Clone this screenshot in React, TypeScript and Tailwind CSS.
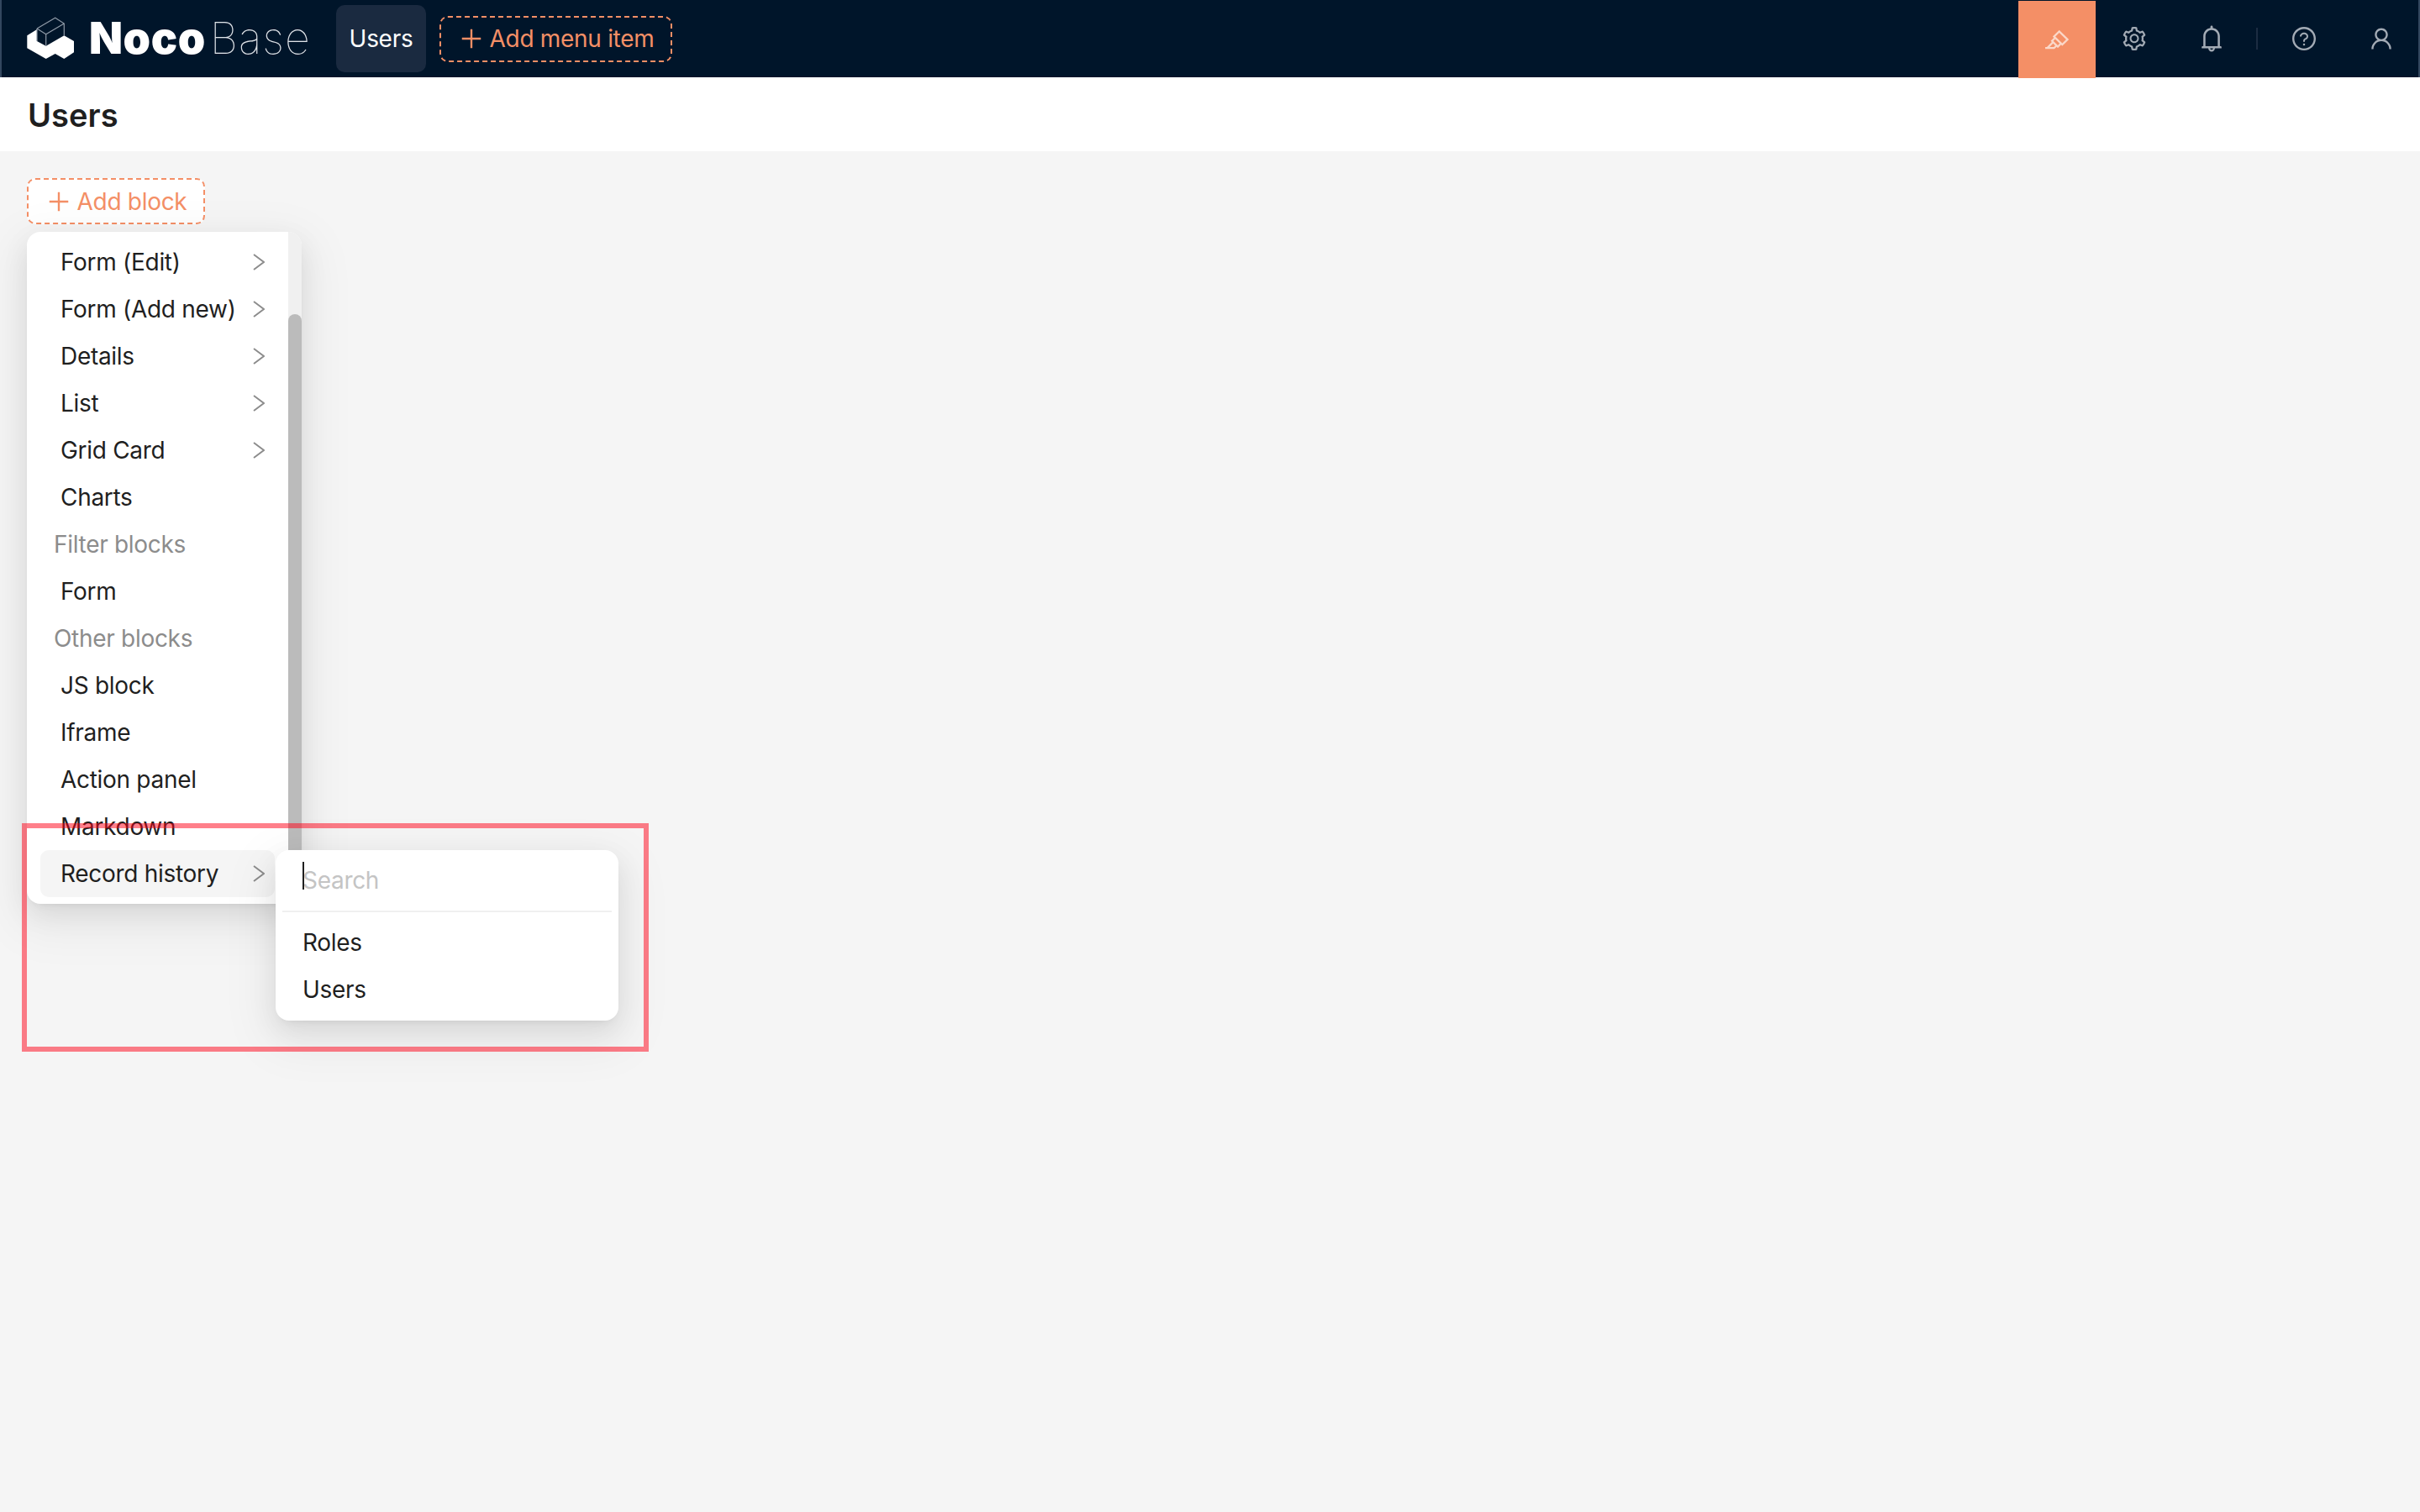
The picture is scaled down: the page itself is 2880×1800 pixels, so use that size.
import React from "react";
import { AiOutlineHighlight, AiOutlineSetting, AiOutlineBell, AiOutlineQuestionCircle, AiOutlineUser, AiOutlinePlus } from "react-icons/ai";

const Chevron = () => (
  <svg width="14" height="20" viewBox="0 0 14 20" fill="none" stroke="#8c8c8c" strokeWidth="2" className="shrink-0">
    <path d="M1 1l12 9-12 9" />
  </svg>
);

const Logo = () => (
  <div className="flex items-center">
    <svg width="58" height="52" viewBox="0 0 58 52" className="shrink-0">
      <path d="M0.3 22.3L12 15V29L22.7 34.7L44.3 22.3L56 29V42.3L44.3 50L33.7 44L22.7 50L0.3 37.3Z" fill="#fff" />
      <path d="M12 14L33.7 1.3L44.3 8V22.3M12 14L22.7 20.7L44.3 8M22.7 20.7V34.7M12 14V29" fill="none" stroke="#8e99a6" strokeWidth="1.2" />
    </svg>
    <span className="ml-[16px] text-[52px] font-black leading-none tracking-[0.6px] text-white">Noco</span>
    <span className="ml-[5px] text-[52px] font-thin leading-none tracking-[1px] text-[#dfe3e8]">Base</span>
  </div>
);

const HeaderIcon = ({ children }: { children: React.ReactNode }) => (
  <div className="flex h-[92px] w-[92px] items-center justify-center text-[#a3abb5]">{children}</div>
);

const Row = ({ label, arrow }: { label: string; arrow?: boolean }) => (
  <div className="flex h-[56px] items-center justify-between pl-[24px] pr-[12px] text-[#1f1f1f]">
    <span>{label}</span>
    {arrow && <Chevron />}
  </div>
);

const Group = ({ label }: { label: string }) => (
  <div className="flex h-[56px] items-center pl-[16px] text-[#8c8c8c]">{label}</div>
);

const shadow = "shadow-[0_12px_32px_0_rgba(0,0,0,0.08),0_6px_12px_-8px_rgba(0,0,0,0.12),0_18px_56px_16px_rgba(0,0,0,0.05)]";

export default function App() {
  return (
    <div className="flex h-screen flex-col overflow-hidden bg-[#f5f5f5] text-[28px] tracking-[-0.3px] font-['Inter','Liberation_Sans',sans-serif]">
      <header className="flex h-[92px] shrink-0 items-center justify-between border-x-2 border-x-[#33475f] bg-[#00152a]">
        <div className="flex items-center">
          <div className="ml-[30px] w-[368px]"><Logo /></div>
          <div className="flex h-[80px] w-[107px] items-center justify-center rounded-[10px] bg-[#1a2a40] text-white">Users</div>
          <div className="ml-[16px] flex h-[55px] w-[277px] items-center justify-center gap-[6px] rounded-[10px] border-2 border-dashed border-[#f48f66] text-[#f48f66]">
            <AiOutlinePlus size={32} />
            <span>Add menu item</span>
          </div>
        </div>
        <div className="-mr-[2px] flex items-center">
          <div className="flex h-[92px] w-[92px] translate-y-[1px] items-center justify-center bg-[#f48f66] text-[#fbd8c9]">
            <AiOutlineHighlight size={32} />
          </div>
          <HeaderIcon><AiOutlineSetting size={32} /></HeaderIcon>
          <HeaderIcon><AiOutlineBell size={36} /></HeaderIcon>
          <div className="ml-[7px] mr-[9px] h-[26px] w-[2px] bg-[#1c2c42]" />
          <HeaderIcon><AiOutlineQuestionCircle size={32} /></HeaderIcon>
          <HeaderIcon><AiOutlineUser size={32} /></HeaderIcon>
        </div>
      </header>

      <div className="flex h-[88px] shrink-0 items-center bg-white pl-[33px] pt-[2px]">
        <h1 className="text-[38px] font-semibold leading-none tracking-[0.1px] text-[#1f1f1f]">Users</h1>
      </div>

      <main className="relative flex-1 pl-[32px] pt-[32px]">
        <div className="flex h-[55px] w-[212px] items-center justify-center gap-[6px] rounded-[10px] border-2 border-dashed border-[#f48f66] bg-white text-[#f48f66]">
          <AiOutlinePlus size={32} />
          <span>Add block</span>
        </div>

        <div className="relative mt-[9px] w-[327px]">
          <div className={`h-[800px] w-[327px] overflow-hidden rounded-[16px] bg-white py-[8px] pl-[16px] pr-[32px] ${shadow}`}>
            <Row label="Form (Edit)" arrow />
            <Row label="Form (Add new)" arrow />
            <Row label="Details" arrow />
            <Row label="List" arrow />
            <Row label="Grid Card" arrow />
            <Row label="Charts" />
            <Group label="Filter blocks" />
            <Row label="Form" />
            <Group label="Other blocks" />
            <Row label="JS block" />
            <Row label="Iframe" />
            <Row label="Action panel" />
            <Row label="Markdown" />
            <div className="rounded-[10px] bg-[#f5f5f5]"><Row label="Record history" arrow /></div>
          </div>

          <div className="absolute right-0 top-0 h-[800px] w-[16px] rounded-r-[16px] bg-[#f0f0f0]">
            <div className="absolute bottom-0 left-0 top-[98px] w-[16px] rounded-t-[8px] bg-[#bbbbbb]" />
          </div>

          <div className={`absolute left-[296px] top-[736px] w-[408px] rounded-[16px] bg-white ${shadow}`}>
            <div className="flex h-[72px] items-center pl-[32px] text-[#c4c4c4]">
              <span className="relative">
                <span className="absolute -top-[1px] left-0 h-[33px] w-[2px] bg-[#1f1f1f]" />
                Search
              </span>
            </div>
            <div className="mx-[8px] h-[2px] bg-[#f0f0f0]" />
            <div className="pb-[9px] pt-[8px]">
              <div className="flex h-[56px] items-center pl-[32px] text-[#1f1f1f]">Roles</div>
              <div className="flex h-[56px] items-center pl-[32px] text-[#1f1f1f]">Users</div>
            </div>
          </div>

          <div className="pointer-events-none absolute -left-[6px] top-[704px] h-[272px] w-[746px] border-[6px] border-[rgba(255,0,21,0.5)]" />
        </div>
      </main>
    </div>
  );
}
